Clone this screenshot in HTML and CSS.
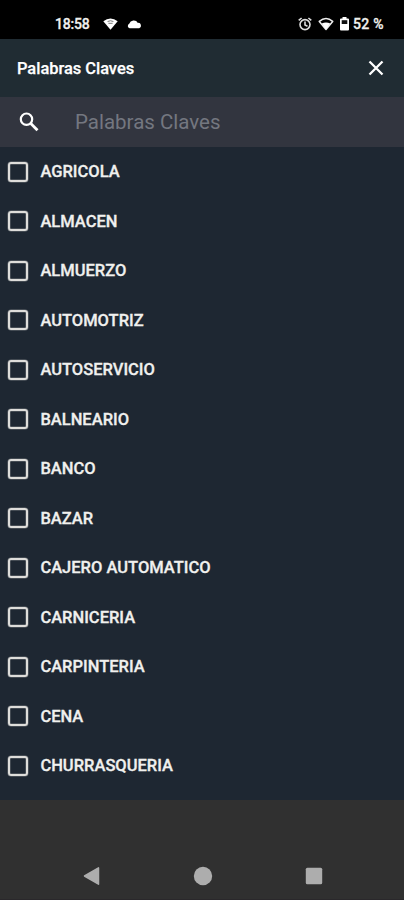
FILE: index.html
```html
<!DOCTYPE html>
<html lang="es">
<head>
<meta charset="utf-8">
<title>Palabras Claves</title>
<link rel="stylesheet" href="styles.css">
</head>
<body>
<div class="status">
  <span class="time">18:58</span>
  <svg class="wifi-left" width="15" height="12" viewBox="0 0 15 12"><path d="M.3 3.2Q7.5-2.2 14.7 3.2L7.5 11.8Z" fill="#fff"/><path d="M4.600 3.500Q7.500 2 10.400 3.500M5.400 5.300H9.600" stroke="#777" fill="none"/></svg>
  <svg class="cloud" width="15" height="10" viewBox="0 0 15 10"><path d="M2.600 9.300A2.400 2.400 0 0 1 2.200 4.800A4.800 4.800 0 0 1 10.900 3.900A2.800 2.800 0 0 1 12.200 9.300Z" fill="#fff"/></svg>
  <svg class="alarm" width="14" height="14" viewBox="0 0 14 14" fill="none" stroke="#ddd" stroke-width="1.600"><circle cx="7" cy="7.600" r="5"/><path d="M.7 3.400 3.600 1M13.300 3.400 10.400 1M7 4.600V7.900L9.500 9.200"/></svg>
  <svg class="wifi-right" width="16" height="14" viewBox="0 0 16 14"><path d="M1.300 4.400Q8-1.300 14.700 4.400L8 12.400Z" fill="none" stroke="#eee" stroke-width="1.500" stroke-linejoin="round"/><path d="M3.700 6.500Q8 4.300 12.300 6.500L8 12.500Z" fill="#fff"/></svg>
  <svg class="battery" width="9" height="14" viewBox="0 0 9 14"><path d="M2.500 0H6.500V1.500H8A1 1 0 0 1 9 2.500V12.500A1 1 0 0 1 8 13.500H1A1 1 0 0 1 0 12.500V2.500A1 1 0 0 1 1 1.500H2.500Z" fill="#fff"/><path d="M1.700 3.200H7.300V7H1.700Z" fill="#111"/></svg>
  <span class="percent">52 %</span>
</div>
<header class="header">
  <h1 class="title">Palabras Claves</h1>
  <svg class="close" width="16" height="16" viewBox="0 0 16 16"><path d="M1.500 1.500 14.500 14.500M14.500 1.500 1.500 14.500" stroke="#fff" stroke-width="2.300"/></svg>
</header>
<div class="search">
  <svg class="magnifier" width="20" height="20" viewBox="0 0 20 20" fill="none" stroke="#fff"><circle cx="7.500" cy="7.200" r="5.700" stroke-width="2.200"/><path d="M11.800 11.500 18.500 18.200" stroke-width="2.800"/></svg>
  <span class="placeholder">Palabras Claves</span>
</div>
<main class="list">
  <label class="row"><i class="box"></i><span>AGRICOLA</span></label>
  <label class="row"><i class="box"></i><span>ALMACEN</span></label>
  <label class="row"><i class="box"></i><span>ALMUERZO</span></label>
  <label class="row"><i class="box"></i><span>AUTOMOTRIZ</span></label>
  <label class="row"><i class="box"></i><span>AUTOSERVICIO</span></label>
  <label class="row"><i class="box"></i><span>BALNEARIO</span></label>
  <label class="row"><i class="box"></i><span>BANCO</span></label>
  <label class="row"><i class="box"></i><span>BAZAR</span></label>
  <label class="row"><i class="box"></i><span>CAJERO AUTOMATICO</span></label>
  <label class="row"><i class="box"></i><span>CARNICERIA</span></label>
  <label class="row"><i class="box"></i><span>CARPINTERIA</span></label>
  <label class="row"><i class="box"></i><span>CENA</span></label>
  <label class="row"><i class="box"></i><span>CHURRASQUERIA</span></label>
</main>
<nav class="nav">
  <svg width="18" height="20" viewBox="0 0 18 20"><path d="M1.500 10 15.500 1.800V18.200Z" fill="#adadad" stroke="#adadad" stroke-width="1.500" stroke-linejoin="round"/></svg>
  <svg width="20" height="20" viewBox="0 0 20 20"><circle cx="10" cy="10" r="9.200" fill="#adadad"/></svg>
  <svg width="18" height="18" viewBox="0 0 18 18"><rect x=".8" y=".8" width="16.400" height="16.400" rx="1.500" fill="#adadad"/></svg>
</nav>
</body>
</html>
```
FILE: styles.css
```css
* { box-sizing: border-box; }
body {
  margin: 0;
  width: 404px;
  height: 900px;
  overflow: hidden;
  display: flex;
  flex-direction: column;
  background: #303030;
  color: #f0f0ee;
  font-family: Roboto, sans-serif;
}
svg { display: block; flex: none; }
.status {
  height: 39px;
  padding: 9px 20px 0 55px;
  display: flex;
  align-items: center;
  background: #000;
  font-size: 14px;
  font-weight: 500;
  white-space: nowrap;
  -webkit-text-stroke: .3px currentColor;
}
.time { width: 48px; letter-spacing: -.2px; }
.cloud { margin-left: 9px; }
.alarm { margin-left: auto; }
.wifi-right { margin-left: 6px; }
.battery { margin-left: 6px; }
.percent { margin-left: 4px; width: 31px; letter-spacing: .3px; }
.header {
  height: 58px;
  padding: 0 20px 0 17px;
  display: flex;
  align-items: center;
  justify-content: space-between;
  background: #202c33;
}
.title {
  margin: 0;
  font-size: 16.4px;
  font-weight: 500;
  color: #fff;
  -webkit-text-stroke: .25px currentColor;
}
.search {
  height: 50px;
  padding-left: 19px;
  display: flex;
  align-items: center;
  background: #32353f;
}
.placeholder { margin-left: 36px; font-size: 20.5px; color: #747780; }
.list { height: 653px; background: #1e2732; }
.row {
  height: 49.5px;
  padding-left: 8px;
  display: flex;
  align-items: center;
  font-size: 16.5px;
  font-weight: 500;
  -webkit-text-stroke: .3px currentColor;
}
.box {
  width: 20px;
  height: 20px;
  margin-right: 12.4px;
  border: 2px solid #deddda;
  border-radius: 3px;
  box-shadow: 0 0 0 .5px rgba(222, 221, 218, .4), inset 0 0 0 .5px rgba(222, 221, 218, .4);
}
.nav {
  height: 100px;
  padding: 52px 81px 0 83px;
  display: flex;
  align-items: center;
  justify-content: space-between;
  border-bottom: 1px solid #2a282b;
}
```
